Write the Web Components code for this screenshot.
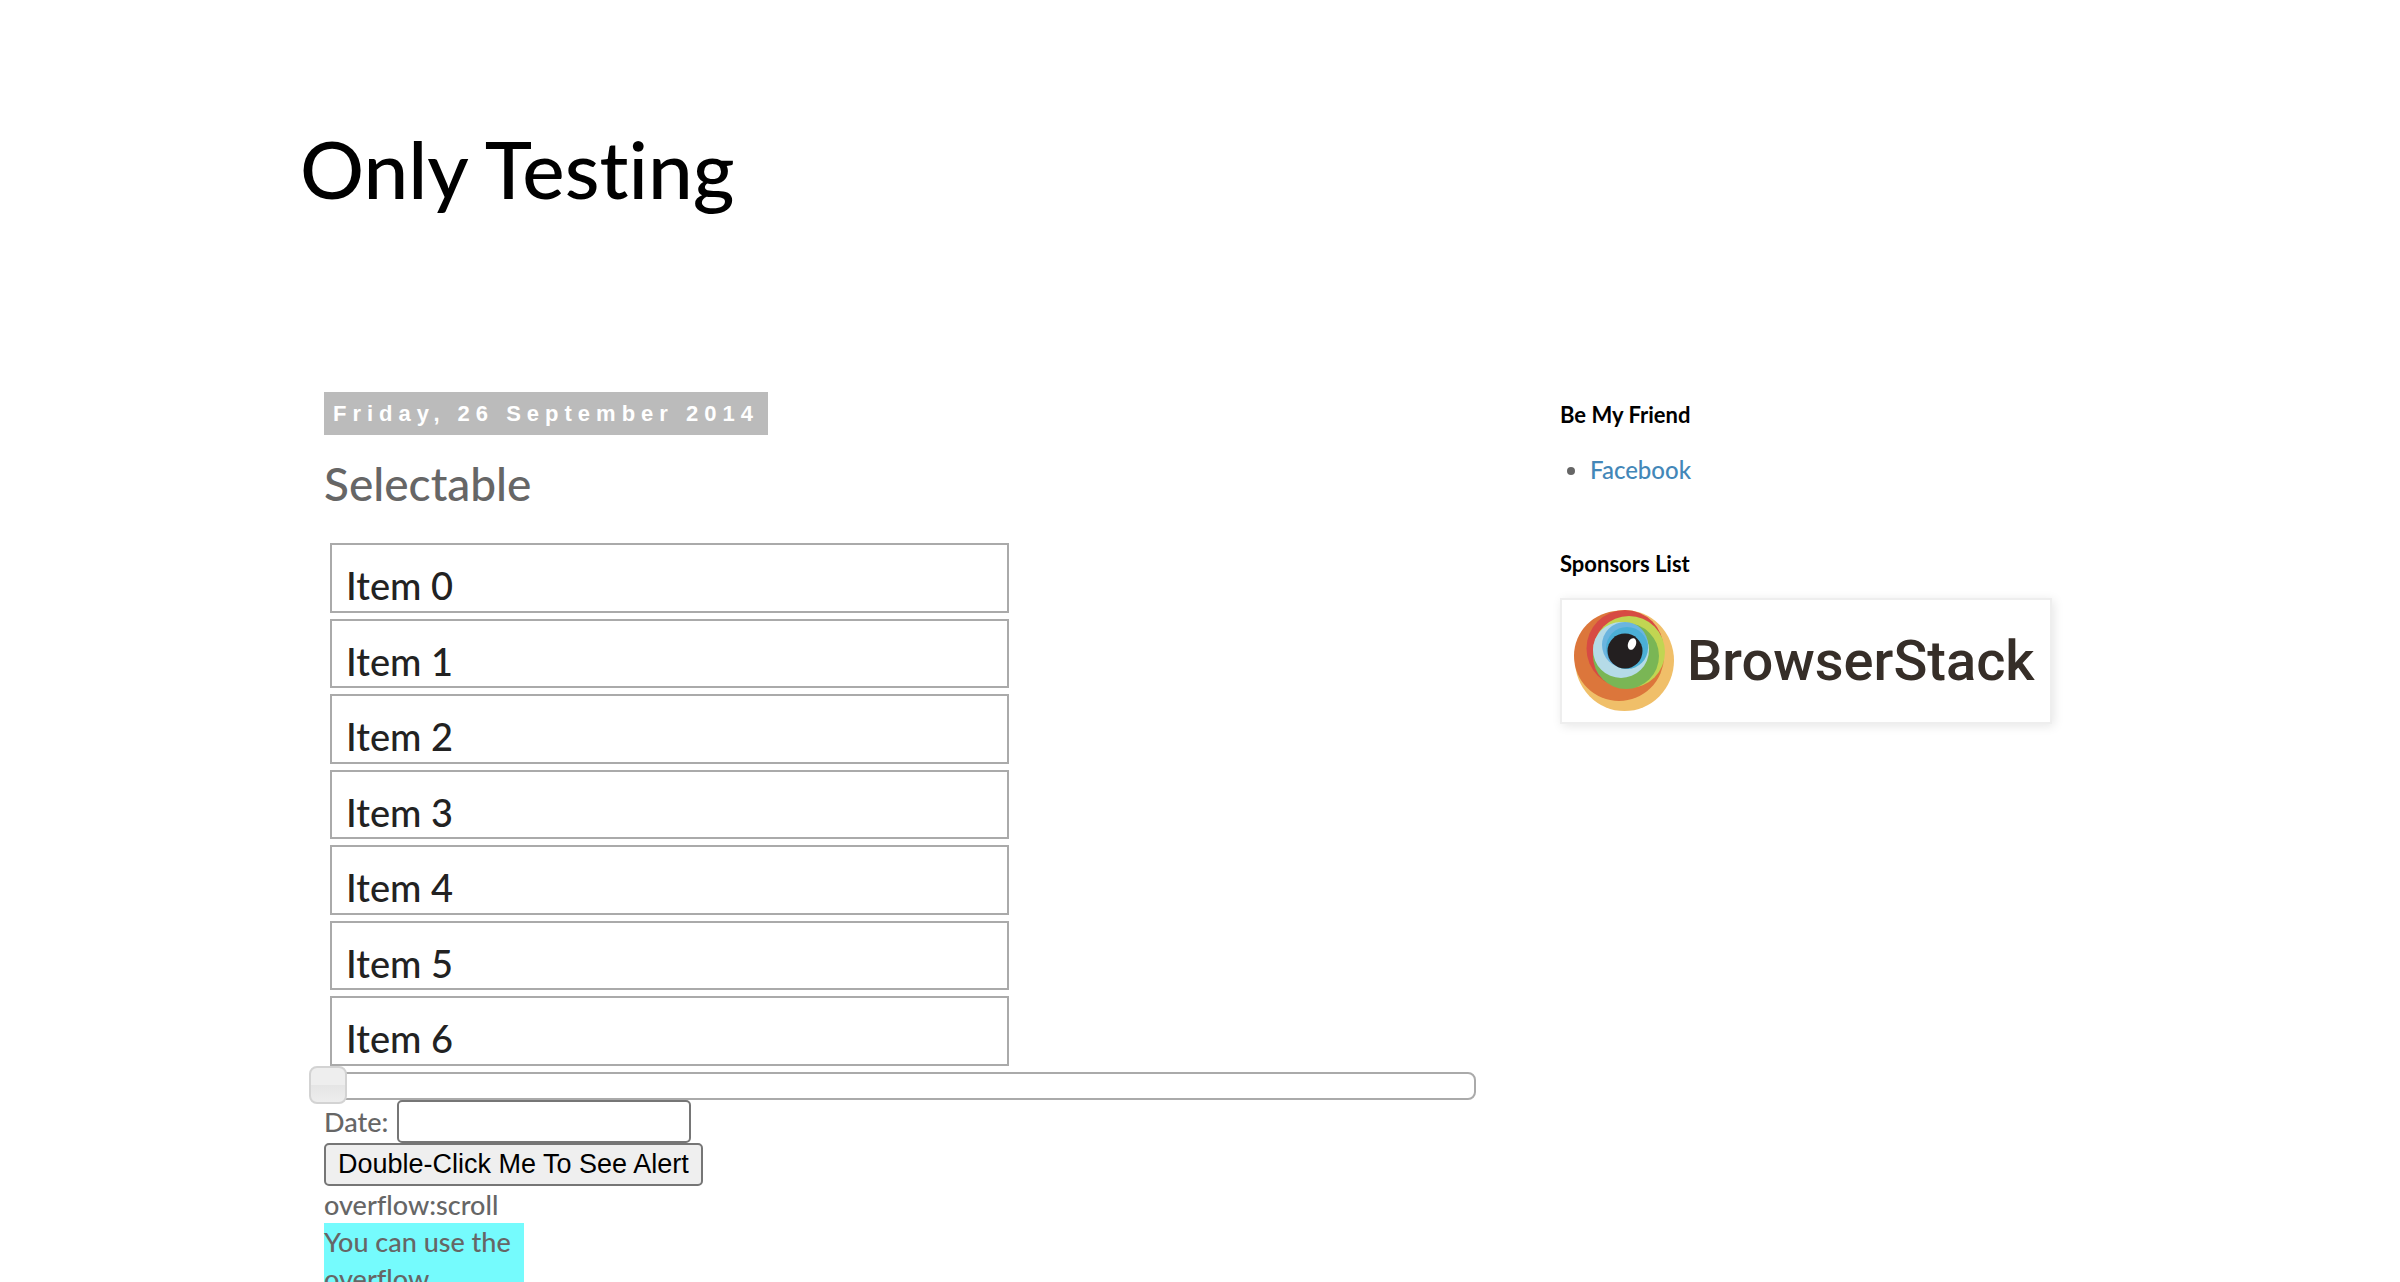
<!DOCTYPE html>
<html lang="en"><head><meta charset="utf-8"><title>Only Testing</title>
<style>
body{margin:0;background:#fff;color:#666;font-family:"Trebuchet MS",Lato,sans-serif;font-weight:500;font-size:27px;line-height:37px;font-variant-ligatures:none}
</style></head><body>
<blog-page>
<blog-title slot="header">Only Testing</blog-title>
<blog-post date="Friday, 26 September 2014" heading="Selectable">
<select-list></select-list>
<value-slider></value-slider>
<date-field></date-field>
<alert-button>Double-Click Me To See Alert</alert-button>
<scroll-sample label="overflow:scroll">You can use the overflow</scroll-sample>
</blog-post>
<side-section slot="side" heading="Be My Friend"><link-list></link-list></side-section>
<side-section slot="side" heading="Sponsors List"><sponsor-logo></sponsor-logo></side-section>
</blog-page>
<script>
const define=(name,html)=>customElements.define(name,class extends HTMLElement{
  constructor(){
    super();
    const t=document.createElement('template');
    t.innerHTML=html;
    this.attachShadow({mode:'open'}).append(t.content.cloneNode(true));
    for(const n of this.shadowRoot.querySelectorAll('[data-attr]'))n.textContent=this.getAttribute(n.dataset.attr);
  }
});
define('blog-page',`<style>
:host{display:block;height:100vh;overflow:hidden}
.wrap{max-width:1800px;margin:0 auto}
.cols{display:grid;grid-template-columns:minmax(0,1152fr) minmax(0,492fr);column-gap:84px;padding:0 48px 0 24px}
aside{display:flex;flex-direction:column;gap:58px;padding-top:4px}
</style><div class="wrap"><slot name="header"></slot><div class="cols"><main><slot></slot></main><aside><slot name="side"></slot></aside></div></div>`);
define('blog-title',`<style>
:host{display:block;padding:118px 0 174px;color:#000}
h1{margin:0;font-size:80px;line-height:100px;font-weight:500}
</style><h1><slot></slot></h1>`);
define('blog-post',`<style>
:host{display:block}
h2{display:table;margin:0;padding:4px 9px;background:#bbb;color:#fff;font:bold 22px/35px "Liberation Sans",Arial,sans-serif;letter-spacing:6px}
h3{margin:22px 0 32px;font-size:46px;line-height:54px;font-weight:500}
</style><article><h2 data-attr="date"></h2><h3 data-attr="heading"></h3><slot></slot></article>`);
define('select-list',`<style>
:host{display:block}
ol{list-style:none;margin:0 0 6px 6px;padding:0;width:60%;max-width:679px;min-height:523px;display:grid;grid-auto-rows:1fr;gap:6px}
li{box-sizing:border-box;border:2px solid #aaa;color:#222;font-size:38px;line-height:50px;padding:15px 14px 0}
</style><ol>${[0,1,2,3,4,5,6].map(i=>`<li>Item ${i}</li>`).join('')}</ol>`);
define('value-slider',`<style>
:host{display:flex;align-items:center;box-sizing:border-box;height:28px;border:2px solid #aaa;border-radius:8px}
input{appearance:none;flex:1;min-width:0;height:38px;margin:-8px -17px -6px;background:none}
input::-webkit-slider-thumb{appearance:none;box-sizing:border-box;width:38px;height:38px;border:2px solid #d3d3d3;border-radius:8px;background:linear-gradient(#eee 50%,#e5e5e5 50%,#ededed)}
</style><input type="range" value="0" aria-label="Value">`);
define('date-field',`<style>
:host{display:flex;align-items:center}
label{margin-right:9px}
input{box-sizing:border-box;width:294px;height:43px;border:2px solid #767676;border-radius:5px;padding:2px 4px;font:27px "Liberation Sans",Arial,sans-serif;background:#fff}
</style><label for="d">Date:</label><input id="d" type="text">`);
define('alert-button',`<style>
:host{display:flex}
button{height:43px;border:2px solid #767676;border-radius:5px;padding:0 12px;background:#efefef;color:#000;font:27px/37px "Liberation Sans",Arial,sans-serif}
</style><button type="button"><slot></slot></button>`);
define('scroll-sample',`<style>
:host{display:block}
div{width:200px;min-height:200px;background:#75fbfd}
</style><span data-attr="label"></span><div><slot></slot></div>`);
define('side-section',`<style>
:host{display:block}
h2{margin:0 0 16px;color:#000;font-size:22px;line-height:37px;font-weight:700}
</style><h2 data-attr="heading"></h2><slot></slot>`);
define('link-list',`<style>
:host{display:block}
ul{margin:0;padding:4px 0 0 30px}
li{font-size:24px;line-height:34px}
a{color:#4387b8;text-decoration:none}
</style><ul><li><a href="#facebook">Facebook</a></li></ul>`);
define('sponsor-logo',`<style>
:host{display:block}
a{display:block;box-sizing:border-box;border:2px solid #eee;padding:10px;box-shadow:2px 2px 10px rgba(0,0,0,.1)}
svg{display:block;width:100%}
</style><a href="#browserstack" aria-label="BrowserStack"><svg viewBox="1572 610 468 102">
<ellipse cx="1624.500" cy="660.500" rx="49.500" ry="50.500" fill="#f0bf69"/>
<circle cx="1619" cy="656" r="45" fill="#dc763b"/>
<circle cx="1625" cy="648.500" r="38.500" fill="#d74b43"/>
<circle cx="1629" cy="652" r="36" fill="#c1d552"/>
<circle cx="1626" cy="656" r="33" fill="#7ab655"/>
<circle cx="1621" cy="650" r="28" fill="#b5dbe7"/>
<circle cx="1625" cy="645" r="23" fill="#6bb5df"/>
<circle cx="1627" cy="648" r="21" fill="#4bafd6"/>
<circle cx="1625" cy="651" r="17.500" fill="#231f20"/>
<ellipse cx="1632" cy="644" rx="4" ry="6" fill="#fff" transform="rotate(20 1632 644)"/>
<text x="1687" y="680" font-family="Roboto" font-weight="500" font-size="56" fill="#362e28">BrowserStack</text>
</svg></a>`);
</script></body></html>
